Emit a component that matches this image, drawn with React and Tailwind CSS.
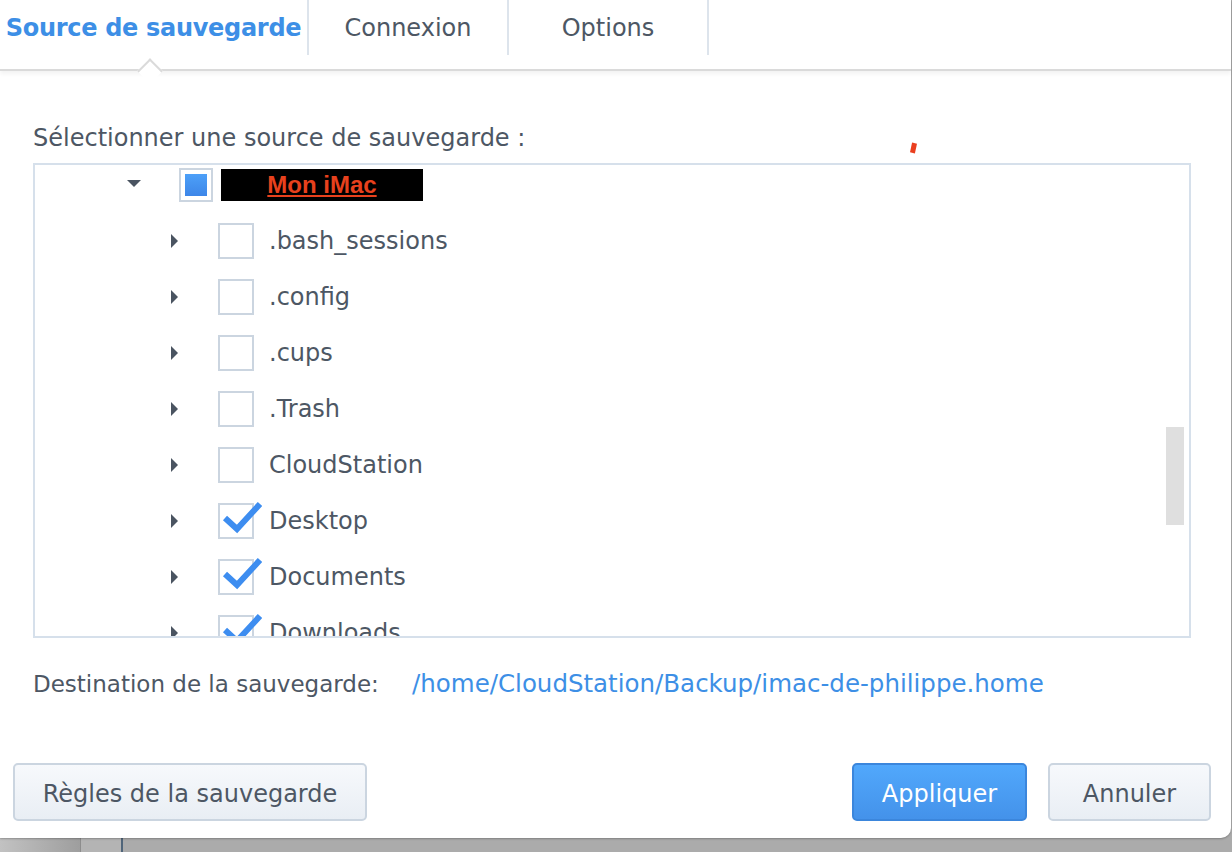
import React from "react";

const rows = [
  { name: ".bash_sessions", checked: false },
  { name: ".config", checked: false },
  { name: ".cups", checked: false },
  { name: ".Trash", checked: false },
  { name: "CloudStation", checked: false },
  { name: "Desktop", checked: true },
  { name: "Documents", checked: true },
  { name: "Downloads", checked: true },
];

const font = { fontFamily: '"DejaVu Sans", Verdana, sans-serif' };

const CheckMark = () => (
  <svg className="absolute left-[2px] top-[-6px]" width="40" height="36" viewBox="0 0 40 36">
    <path d="M3 19 L15 30 L38 5" fill="none" stroke="#3d8df0" strokeWidth="6" strokeLinejoin="miter" />
  </svg>
);

const TreeRow = ({ name, checked }) => (
  <div className="flex items-center h-[56px] pl-[136px]">
    <div className="w-0 h-0 border-y-[7px] border-y-transparent border-l-[7px] border-l-[#4a5461]" />
    <div className="relative ml-[40px] w-[36px] h-[36px] border-2 border-[#cbd5e0] bg-white">
      {checked && <CheckMark />}
    </div>
    <span className="ml-[15px] text-[24px] text-[#4d5764]">{name}</span>
  </div>
);

export default function App() {
  return (
    <div className="relative w-[1232px] h-[852px] overflow-hidden bg-[#ababab]" style={font}>
      {/* background strip below dialog */}
      <div className="absolute left-0 bottom-0 h-[14px] w-[80px] bg-gradient-to-r from-[#c2c2c2] to-[#9e9e9e]" />
      <div className="absolute left-[80px] bottom-0 h-[14px] w-[41px] bg-[#b4b4b4] border-l border-[#8d8d8d]" />
      <div className="absolute left-[121px] bottom-0 h-[14px] w-[2px] bg-[#50657a]" />

      <div className="relative w-[1231px] h-[838px] bg-white rounded-br-[10px] flex flex-col shadow-[0_1px_2px_rgba(0,0,0,0.25)]">
        {/* tabs */}
        <div className="relative h-[71px] border-b-2 border-[#dadada] shadow-[0_3px_4px_rgba(0,0,0,0.05)] flex items-start">
          <div className="w-[309px] h-[55px] flex items-center justify-center border-r-2 border-[#dde4ec] text-[24px] font-bold text-[#3d8fe6] tracking-[-0.3px]">
            Source de sauvegarde
          </div>
          <div className="w-[200px] h-[55px] flex items-center justify-center border-r-2 border-[#dde4ec] text-[24px] text-[#4d5764]">
            Connexion
          </div>
          <div className="w-[200px] h-[55px] flex items-center justify-center border-r-2 border-[#dde4ec] text-[24px] text-[#4d5764]">
            Options
          </div>
          <div className="absolute left-[141px] bottom-[-11px] w-[18px] h-[18px] rotate-45 bg-white border-l-2 border-t-2 border-[#dadada]" />
        </div>

        {/* content */}
        <div className="relative flex-1 flex flex-col px-[33px] pt-[52px]">
          <div className="text-[24px] text-[#4d5764] leading-[30px]">Sélectionner une source de sauvegarde :</div>
          <div className="absolute left-[911px] top-[72px] w-[5px] h-[10px] bg-[#ea3f1f] rotate-[12deg]" />

          <div className="relative mt-[10px] w-[1158px] h-[475px] border-2 border-[#d6e0eb] overflow-hidden">
            <div className="flex items-center h-[40px] pl-[92px]">
              <div className="w-0 h-0 border-x-[7px] border-x-transparent border-t-[7px] border-t-[#4a5461] mt-[-4px]" />
              <div className="ml-[38px] w-[34px] h-[34px] border-2 border-[#cbd5e0] flex items-center justify-center">
                <div className="w-[22px] h-[22px] bg-gradient-to-b from-[#4da0f8] to-[#3d86e8]" />
              </div>
              <div className="ml-[8px] w-[202px] h-[32px] bg-black flex items-center justify-center">
                <span className="text-[24px] leading-[28px] font-bold text-[#e8411d] underline" style={{ fontFamily: '"Liberation Sans", Arial, sans-serif' }}>
                  Mon iMac
                </span>
              </div>
            </div>
            <div className="pt-[8px]">
              {rows.map((r) => (
                <TreeRow key={r.name} {...r} />
              ))}
            </div>
            <div className="absolute right-[5px] top-[262px] w-[18px] h-[98px] bg-[#dfdfdf]" />
          </div>

          <div className="mt-[31px] flex items-center leading-[30px]">
            <span className="w-[379px] text-[23px] text-[#4d5764]">Destination de la sauvegarde:</span>
            <span className="text-[24.5px] text-[#3d8fe6]">/home/CloudStation/Backup/imac-de-philippe.home</span>
          </div>

          <div className="mt-auto mb-[17px] -ml-[20px] -mr-[13px] flex items-center">
            <button className="w-[354px] h-[58px] pt-[3px] rounded-[5px] border-2 border-[#cbd5e0] bg-gradient-to-b from-[#f7f9fc] to-[#e9eef4] text-[24px] text-[#4d5764]">
              Règles de la sauvegarde
            </button>
            <div className="flex-1" />
            <button className="w-[175px] h-[58px] pt-[3px] rounded-[5px] border-2 border-[#3b86dc] bg-gradient-to-b from-[#51a8fc] to-[#4492ea] text-[24px] text-white">
              Appliquer
            </button>
            <button className="ml-[21px] w-[163px] h-[58px] pt-[3px] rounded-[5px] border-2 border-[#cbd5e0] bg-gradient-to-b from-[#f7f9fc] to-[#e9eef4] text-[24px] text-[#4d5764]">
              Annuler
            </button>
          </div>
        </div>
      </div>
    </div>
  );
}
